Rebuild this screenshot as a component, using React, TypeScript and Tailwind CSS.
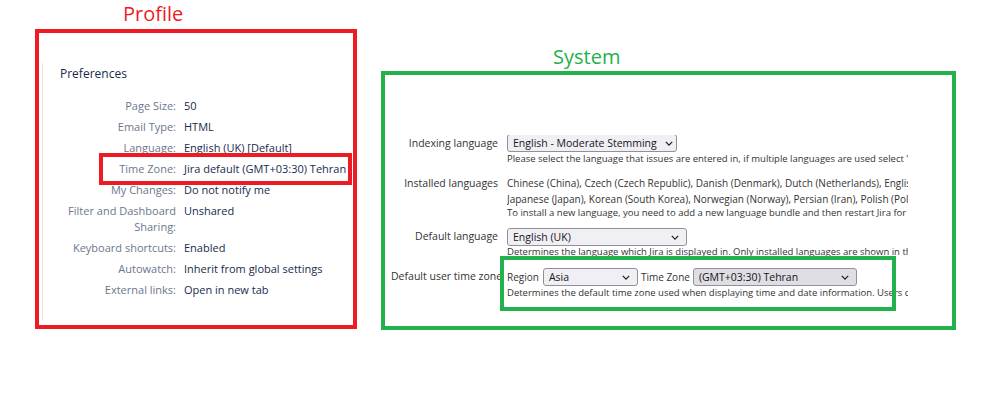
import type { ReactNode } from 'react'

const prefs: [ReactNode, string][] = [
  ['Page Size:', '50'],
  ['Email Type:', 'HTML'],
  ['Language:', 'English (UK) [Default]'],
  ['Time Zone:', 'Jira default (GMT+03:30) Tehran'],
  ['My Changes:', 'Do not notify me'],
  [
    <>
      Filter and Dashboard
      <br />
      Sharing:
    </>,
    'Unshared',
  ],
  ['Keyboard shortcuts:', 'Enabled'],
  ['Autowatch:', 'Inherit from global settings'],
  ['External links:', 'Open in new tab'],
]

function Chevron() {
  return (
    <svg viewBox="0 0 10 6" fill="none" stroke="#1b1b1f" strokeWidth={1.5} className="w-[8px] h-[5px] flex-shrink-0">
      <path d="M1 1l4 4 4-4" />
    </svg>
  )
}

function Select({ value, className }: { value: string; className: string }) {
  return (
    <div
      className={`flex items-center justify-between gap-2 h-[18px] pl-[5px] pr-[7px] border border-[#8f8f9d] rounded-[3px] text-[10.5px] leading-[16px] text-[#15141a] ${className}`}
    >
      <span className="whitespace-nowrap">{value}</span>
      <Chevron />
    </div>
  )
}

function Row({ label, children }: { label: string; children: ReactNode }) {
  return (
    <>
      <div className="text-right whitespace-nowrap text-[10.5px] leading-[16px] text-[#333]">{label}</div>
      <div className="min-w-0 overflow-hidden">{children}</div>
    </>
  )
}

export default function App() {
  return (
    <div className="w-[999px] h-[413px] bg-white flex items-start pl-[35px] font-['Open_Sans',sans-serif]">
      {/* Profile */}
      <div className="flex flex-col">
        <div className="h-[29px] pl-[88px] pt-[2px] text-[20px] leading-[24px] text-[#ed1c24]">Profile</div>
        <div className="relative w-[322px] h-[300px] border-4 border-[#ed1c24]">
          <div className="ml-[3px] mt-[30px] h-[258px] border-l border-[#e4e4e4] pl-[17px] pt-[2px]">
            <h2 className="text-[12px] leading-[18px] text-[#172b4d]">Preferences</h2>
            <div className="mt-[15px] grid grid-cols-[116px_1fr] gap-x-[8px] gap-y-[5px] text-[11px] leading-[16px]">
              {prefs.map(([label, value]) => (
                <div key={value} className="contents">
                  <div className="text-right text-[#6b778c] whitespace-nowrap">{label}</div>
                  <div className="text-[#172b4d] whitespace-nowrap">{value}</div>
                </div>
              ))}
            </div>
          </div>
          {/* highlight */}
          <div className="absolute left-[60px] top-[120px] w-[253px] h-[32px] border-4 border-[#ed1c24]" />
        </div>
      </div>

      {/* System */}
      <div className="flex flex-col ml-[24px]">
        <div className="h-[71px] pl-[172px] pt-[45px] text-[20px] leading-[24px] text-[#22b14c]">System</div>
        <div className="relative w-[575px] h-[259px] border-4 border-[#22b14c]">
          <div className="pl-[6px] pt-[60px] w-[527px] grid grid-cols-[107px_401px] gap-x-[9px] items-start">
            <Row label="Indexing language">
              <div className="pt-[1px]">
                <Select value="English - Moderate Stemming" className="w-[170px] bg-[#f0f0f4] -mt-[2px]" />
                <div className="mt-[1px] text-[9.5px] leading-[12px] text-[#333] whitespace-nowrap">
                  Please select the language that issues are entered in, if multiple languages are used select 'Other'.
                </div>
              </div>
            </Row>
            <div className="col-span-2 h-[10px]" />
            <Row label="Installed languages">
              <div className="text-[10px] leading-[16px] text-[#333] whitespace-nowrap">
                <div>Chinese (China), Czech (Czech Republic), Danish (Denmark), Dutch (Netherlands), English (UK)</div>
                <div>Japanese (Japan), Korean (South Korea), Norwegian (Norway), Persian (Iran), Polish (Poland)</div>
                <div className="text-[9.5px] leading-[12px]">
                  To install a new language, you need to add a new language bundle and then restart Jira for the changes to take effect.
                </div>
              </div>
            </Row>
            <div className="col-span-2 h-[9px]" />
            <Row label="Default language">
              <div>
                <Select value="English (UK)" className="w-[180px] bg-[#f0f0f4]" />
                <div className="text-[9.5px] leading-[12px] text-[#333] whitespace-nowrap">
                  Determines the language which Jira is displayed in. Only installed languages are shown in this list.
                </div>
              </div>
            </Row>
            <div className="col-span-2 h-[10px]" />
            <Row label="Default user time zone">
              <div>
                <div className="flex items-center text-[10px] leading-[16px] text-[#333]">
                  <span>Region</span>
                  <Select value="Asia" className="ml-[4px] w-[95px] bg-[#f0f0f4]" />
                  <span className="ml-[3px] whitespace-nowrap">Time Zone</span>
                  <Select value="(GMT+03:30) Tehran" className="ml-[3px] w-[164px] bg-[#dedee3]" />
                </div>
                <div className="mt-[1px] text-[9.5px] leading-[12px] text-[#333] whitespace-nowrap">
                  Determines the default time zone used when displaying time and date information. Users can override this.
                </div>
              </div>
            </Row>
          </div>
          {/* highlight */}
          <div className="absolute left-[115px] top-[181px] w-[396px] h-[55px] border-4 border-[#22b14c]" />
        </div>
      </div>
    </div>
  )
}
